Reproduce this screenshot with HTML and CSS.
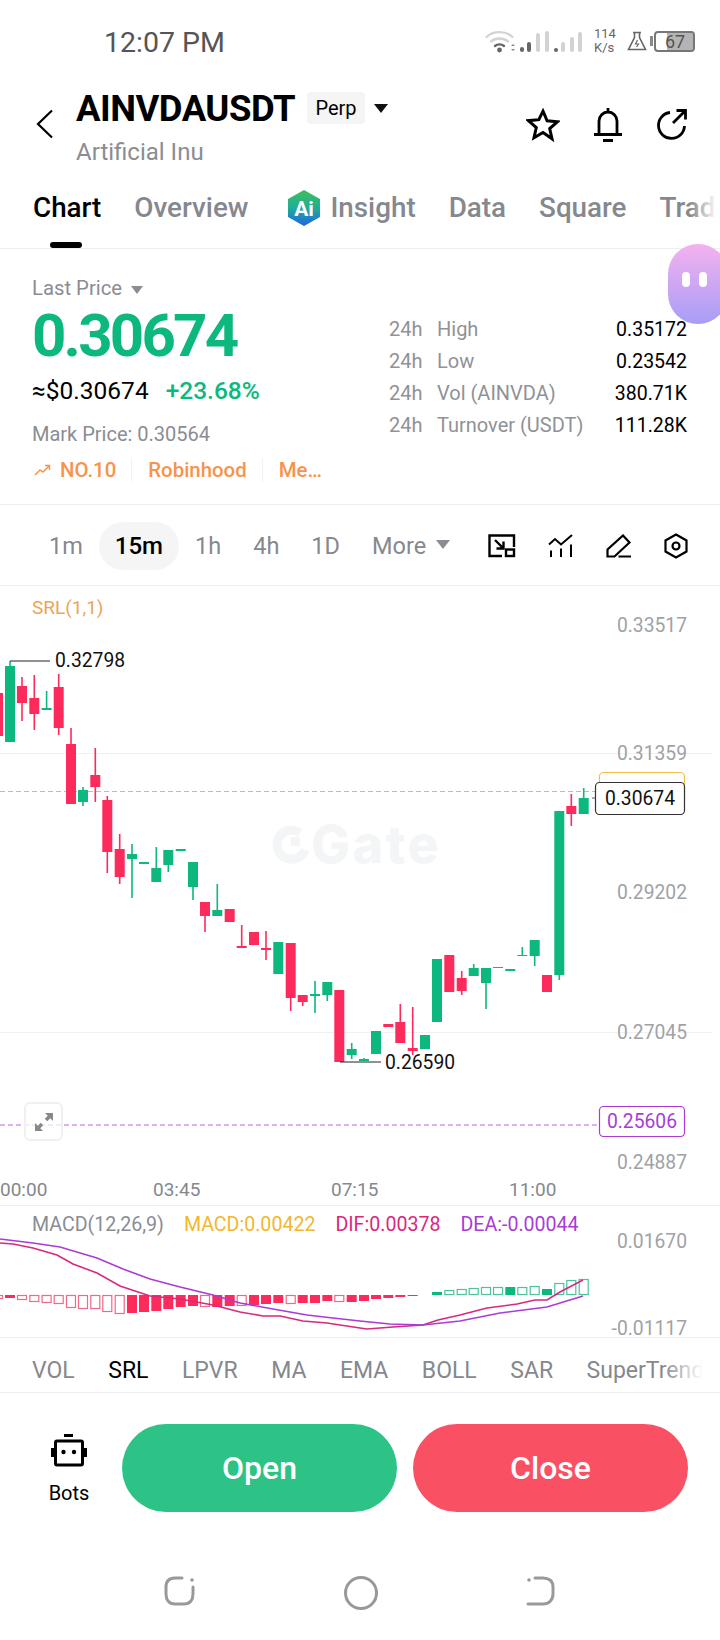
FILE: index.html
```html
<!DOCTYPE html>
<html lang="en">
<head>
    <meta charset="UTF-8">
    <meta name="viewport" content="width=device-width, initial-scale=1.0">
    <title>AINVDAUSDT</title>
    <link rel="stylesheet" href="styles.css">
</head>
<body>
    <div class="status-bar">
        <span class="clock">12:07 PM</span>
        <div class="status-icons">
            <svg class="signal" width="98" height="26" viewBox="0 0 98 26">
                <g fill="none" stroke-width="2.4" stroke-linecap="round">
                    <path d="M1.5 9C8 2.5 21 2.5 27.5 9" stroke="#d4d4d4"/>
                    <path d="M6 13.5C10.5 9.5 18.5 9.5 23 13.5" stroke="#d4d4d4"/>
                    <path d="M10 18C12.5 15.8 16.5 15.8 19 18" stroke="#666"/>
                </g>
                <circle cx="14.5" cy="22" r="2.4" fill="#666"/>
                <path d="M26 18l2-2 2 2zM26 21l2 2 2-2z" fill="#888"/>
                <g fill="#666">
                    <rect x="35" y="19" width="4" height="5" rx="2"/>
                    <rect x="42" y="14" width="4" height="10" rx="2"/>
                    <rect x="69" y="20" width="4" height="4" rx="2"/>
                </g>
                <g fill="#d2d2d2">
                    <rect x="51" y="5" width="4" height="19" rx="2"/>
                    <rect x="60" y="3" width="4" height="21" rx="2"/>
                    <rect x="76" y="14" width="4" height="10" rx="2"/>
                    <rect x="85" y="9" width="4" height="15" rx="2"/>
                    <rect x="93" y="4" width="4" height="20" rx="2"/>
                </g>
            </svg>
            <div class="net-speed"><span>114</span><span>K/s</span></div>
            <svg class="flask" width="20" height="20" viewBox="0 0 20 20" fill="none" stroke="#666" stroke-width="1.6">
                <path d="M6 1.5h8M7.5 1.5v5L1.5 18.5h17L12.5 6.5v-5"/>
                <path d="M10.5 9l-2 4h3l-2 3" stroke-width="1.2"/>
            </svg>
            <span class="battery-nub"></span>
            <div class="battery">67</div>
        </div>
    </div>

    <header class="top-bar">
        <svg class="back" width="20" height="30" viewBox="0 0 20 30" fill="none" stroke="#000" stroke-width="2.2">
            <path d="M17 1.5L3 15l14 13.5"/>
        </svg>
        <div class="pair">
            <div class="pair-row">
                <h1>AINVDAUSDT</h1>
                <span class="pair-type">Perp</span>
                <span class="caret caret-dark"></span>
            </div>
            <div class="pair-name">Artificial Inu</div>
        </div>
        <div class="top-actions">
            <svg width="34" height="34" viewBox="0 0 32 32" fill="none" stroke="#000" stroke-width="2.8">
                <path d="M16 3l3.9 9 9.8.9-7.4 6.5 2.2 9.6L16 23l-8.5 5 2.2-9.6-7.4-6.500 9.800-.9z"/>
            </svg>
            <svg width="30" height="34" viewBox="0 0 30 34" fill="none" stroke="#000" stroke-width="2.8">
                <path d="M15 0v3M6 26V13a9 9 0 0 1 18 0v13M1 26.5h28M10 32.5h10"/>
            </svg>
            <svg width="32" height="32" viewBox="0 0 32 32" fill="none" stroke="#000" stroke-width="2.8">
                <path d="M14 4.5A13 13 0 1 0 28.5 18M17 15L29.5 2.5M20.5 2.5h9v9"/>
            </svg>
        </div>
    </header>

    <nav class="tabs">
        <span class="tab tab-active">Chart</span>
        <span class="tab">Overview</span>
        <span class="tab tab-insight">
            <svg width="34" height="36" viewBox="0 0 34 36">
                <defs>
                    <linearGradient id="aiGrad" x1="0" y1="0" x2="0" y2="1">
                        <stop offset="0" stop-color="#3ebd5c"/>
                        <stop offset="0.5" stop-color="#1fae9a"/>
                        <stop offset="1" stop-color="#2267e0"/>
                    </linearGradient>
                </defs>
                <path d="M17 1l15 8.5v17L17 35 2 26.500V9.500z" fill="url(#aiGrad)" stroke="url(#aiGrad)" stroke-width="2" stroke-linejoin="round"/>
                <text class="ai-mark" x="17" y="26" text-anchor="middle">Ai</text>
            </svg>
            Insight
        </span>
        <span class="tab">Data</span>
        <span class="tab">Square</span>
        <span class="tab">Trade</span>
    </nav>

    <section class="price-panel">
        <div class="price-main">
            <div class="price-kind">Last Price <span class="caret"></span></div>
            <div class="price-value">0.30674</div>
            <div class="price-sub"><span>≈$0.30674</span><span class="up">+23.68%</span></div>
            <div class="mark-price">Mark Price: 0.30564</div>
            <div class="price-tags">
                <svg width="17" height="12" viewBox="0 0 17 12" fill="none" stroke="#f7934b" stroke-width="1.5">
                    <path d="M1 11l5-5 3 2 6-6M11 1.500h4.500V6"/>
                </svg>
                <span class="tag-first">NO.10</span>
                <span class="tag">Robinhood</span>
                <span class="tag">Me…</span>
            </div>
        </div>
        <div class="stats">
            <div class="stat"><span class="stat-period">24h</span><span class="stat-label">High</span><span class="stat-value">0.35172</span></div>
            <div class="stat"><span class="stat-period">24h</span><span class="stat-label">Low</span><span class="stat-value">0.23542</span></div>
            <div class="stat"><span class="stat-period">24h</span><span class="stat-label">Vol (AINVDA)</span><span class="stat-value">380.71K</span></div>
            <div class="stat"><span class="stat-period">24h</span><span class="stat-label">Turnover (USDT)</span><span class="stat-value">111.28K</span></div>
        </div>
        <div class="float-bot"><i></i><i></i></div>
    </section>

    <div class="time-bar">
        <span class="interval">1m</span>
        <span class="interval interval-active">15m</span>
        <span class="interval">1h</span>
        <span class="interval">4h</span>
        <span class="interval">1D</span>
        <span class="interval">More <span class="caret"></span></span>
        <div class="chart-tools">
            <svg width="28" height="24" viewBox="0 0 28 24" fill="none" stroke="#000" stroke-width="2.400">
                <path d="M14 22H1.500V1.500H26V13M7 6l8 8M15.500 7.500V14.500H8.500"/>
                <rect x="18" y="15.500" width="8" height="6.500"/>
            </svg>
            <svg width="26" height="24" viewBox="0 0 26 24" fill="none" stroke="#000" stroke-width="2">
                <path d="M1 10.500L7 5l6 5.500L24 1M3 16.500V23M13 14.500V23M23 10.500V23"/>
            </svg>
            <svg width="26" height="24" viewBox="0 0 26 24" fill="none" stroke="#000" stroke-width="2.200">
                <path d="M1.500 22.500V15.500L17 1.500l6.500 7L8.500 22.500zM12.500 22.500H25"/>
            </svg>
            <svg width="24" height="26" viewBox="0 0 24 26" fill="none" stroke="#000" stroke-width="2.200">
                <path d="M12 1.500l10.500 6v11L12 24.500l-10.500-6v-11z"/>
                <circle cx="12" cy="13" r="3.500"/>
            </svg>
        </div>
    </div>

    <section class="chart">
        <svg class="chart-canvas" width="720" height="619" viewBox="0 586 720 619">
            <g stroke="#f0f1f2" stroke-width="1">
                <line x1="0" y1="753.5" x2="712" y2="753.5"/>
                <line x1="0" y1="1032.500" x2="712" y2="1032.500"/>
            </g>
            <g class="watermark">
                <path d="M300 833A14.500 14.500 0 1 0 305 850" fill="none" stroke="#f3f5f6" stroke-width="9"/>
                <rect x="291" y="837" width="9" height="9" fill="#f3f5f6"/>
                <text x="311" y="863">Gate</text>
            </g>
            <text class="srl-label" x="32" y="614">SRL(1,1)</text>
            <line class="last-line" x1="0" y1="791.500" x2="596" y2="791.500"/>
            <line class="liq-line" x1="0" y1="1125" x2="600" y2="1125"/>
            <g id="candles"></g>

            <path d="M10 661H50M340 1062H381" stroke="#222" stroke-width="1.200" fill="none"/>
            <text class="extreme" x="55" y="667">0.32798</text>
            <text class="extreme" x="385" y="1069">0.26590</text>

            <g class="axis">
                <text x="687" y="632">0.33517</text>
                <text x="687" y="760">0.31359</text>
                <text x="687" y="899">0.29202</text>
                <text x="687" y="1039">0.27045</text>
                <text x="687" y="1169">0.24887</text>
            </g>

            <rect x="599.500" y="772.500" width="85" height="30" rx="4" fill="#fff" stroke="#eec14a" stroke-width="1.200"/>
            <path d="M592 798h3" stroke="#555" stroke-width="1"/>
            <rect x="595.500" y="782.500" width="89" height="32" rx="4" fill="#fff" stroke="#333" stroke-width="1.200"/>
            <text class="tag-price" x="640" y="805">0.30674</text>
            <rect x="599.500" y="1106.500" width="85" height="30" rx="4" fill="#fff" stroke="#a93cd6" stroke-width="1.200"/>
            <text class="tag-price tag-liq" x="642" y="1128">0.25606</text>
        </svg>
        <div class="expand">
            <svg width="20" height="20" viewBox="0 0 20 20" fill="#888">
                <path d="M11 1h8v8l-2.800-2.800-3 3-2.400-2.400 3-3zM9 19H1v-8l2.800 2.800 3-3 2.400 2.400-3 3z"/>
            </svg>
        </div>
        <div class="time-axis">
            <span>00:00</span>
            <span>03:45</span>
            <span>07:15</span>
            <span>11:00</span>
        </div>
    </section>

    <section class="macd">
        <div class="macd-legend">
            <span class="macd-name">MACD(12,26,9)</span>
            <span class="macd-val">MACD:0.00422</span>
            <span class="macd-dif">DIF:0.00378</span>
            <span class="macd-dea">DEA:-0.00044</span>
        </div>
        <svg class="macd-canvas" width="720" height="131" viewBox="0 1206 720 131">
            <g id="macdBars"></g>
            <polyline id="difLine" class="dif-line" points=""/>
            <polyline id="deaLine" class="dea-line" points=""/>
            <g class="axis">
                <text x="687" y="1248">0.01670</text>
                <text x="687" y="1335">-0.01117</text>
            </g>
        </svg>
    </section>

    <nav class="indicators">
        <span>VOL</span>
        <span class="indicator-active">SRL</span>
        <span>LPVR</span>
        <span>MA</span>
        <span>EMA</span>
        <span>BOLL</span>
        <span>SAR</span>
        <span>SuperTrend</span>
    </nav>

    <div class="actions">
        <div class="bots">
            <svg width="36" height="33" viewBox="0 0 36 33" fill="none" stroke="#000" stroke-width="3">
                <path d="M13 1.500h9" />
                <rect x="4.500" y="7" width="27" height="24" rx="1.500"/>
                <path d="M1.500 14v9M34.500 14v9"/>
                <circle cx="12.500" cy="18" r="2.200" fill="#000" stroke="none"/>
                <circle cx="23" cy="18" r="2.200" fill="#000" stroke="none"/>
            </svg>
            <span>Bots</span>
        </div>
        <button class="trade-btn btn-open">Open</button>
        <button class="trade-btn btn-close">Close</button>
    </div>

    <div class="nav-bar">
        <svg width="32" height="30" viewBox="0 0 32 30" fill="none" stroke="#999" stroke-width="3" stroke-linecap="round">
            <path d="M18 2H11C5 2 2 5.500 2 11v7c0 6 3 10 9 10h9c6 0 9-4 9-10v-7"/>
            <circle cx="28" cy="4" r="1.800" fill="#999" stroke="none"/>
        </svg>
        <svg width="36" height="34" viewBox="0 0 36 34" fill="none" stroke="#999" stroke-width="3">
            <circle cx="18" cy="17" r="15.500"/>
        </svg>
        <svg width="30" height="30" viewBox="0 0 30 30" fill="none" stroke="#999" stroke-width="3" stroke-linecap="round">
            <path d="M9 2h8c6 0 10 3 10 9v7c0 6-4 10-10 10H2"/>
            <circle cx="3" cy="4" r="1.800" fill="#999" stroke="none"/>
        </svg>
    </div>

    <script src="chart.js"></script>
</body>
</html>
```

FILE: styles.css
```css
* {
    box-sizing: border-box;
}

body {
    margin: 0;
    width: 720px;
    height: 1640px;
    overflow: hidden;
    position: relative;
    background: #fff;
    color: #000;
    font-family: 'Roboto', 'Liberation Sans', sans-serif;
}

/* status bar */
.status-bar {
    height: 82px;
    display: flex;
    align-items: center;
    padding-left: 104px;
}

.clock {
    font-size: 28.500px;
    color: #555;
    margin-top: 2px;
}

.status-icons {
    margin-left: auto;
    display: flex;
    align-items: center;
    padding-right: 25px;
}

.signal {
    margin-right: 11px;
}

.net-speed {
    display: flex;
    flex-direction: column;
    font-size: 13px;
    line-height: 14px;
    color: #666;
    width: 33px;
}

.flask {
    margin-right: 3px;
}

.battery-nub {
    width: 3px;
    height: 10px;
    background: #888;
    margin-right: 1px;
}

.battery {
    width: 41px;
    height: 21px;
    border: 2px solid #777;
    border-radius: 4px;
    font-size: 18px;
    line-height: 17px;
    color: #555;
    padding-left: 9px;
    background: linear-gradient(90deg, #fff 30%, #b4b4b4 30%);
    background-clip: content-box;
}

/* pair header */
.top-bar {
    height: 90px;
    display: flex;
    position: relative;
    padding-left: 35px;
}

.back {
    margin-top: 27px;
    margin-right: 21px;
}

.pair-row {
    display: flex;
    align-items: center;
    height: 42px;
    margin-top: 5px;
}

.pair-row h1 {
    margin: 0;
    font-size: 36.500px;
    font-weight: 700;
    letter-spacing: -0.5px;
}

.pair-type {
    margin-left: 12px;
    width: 58px;
    height: 32px;
    background: #f5f5f5;
    border-radius: 4px;
    font-size: 20px;
    line-height: 32px;
    text-align: center;
}

.caret {
    display: inline-block;
    width: 0;
    height: 0;
    border-left: 6px solid transparent;
    border-right: 6px solid transparent;
    border-top: 8px solid #8a8d93;
    vertical-align: middle;
    margin-left: 4px;
}

.caret-dark {
    margin-left: 9px;
    border-left-width: 7px;
    border-right-width: 7px;
    border-top: 9px solid #111;
}

.pair-name {
    font-size: 24px;
    color: #8a8d93;
    margin-top: 9px;
}

.top-actions {
    margin-left: auto;
    display: flex;
    align-items: flex-start;
    gap: 33px;
    padding-top: 26px;
    padding-right: 32px;
}

/* tabs */
.tabs {
    height: 77px;
    display: flex;
    gap: 33px;
    padding-left: 33px;
    padding-top: 16px;
    border-bottom: 1px solid #eeeeee;
    position: relative;
    overflow: hidden;
    white-space: nowrap;
}

.tabs::after {
    content: "";
    position: absolute;
    right: 0;
    top: 0;
    bottom: 0;
    width: 30px;
    background: linear-gradient(90deg, rgba(255, 255, 255, 0), #fff 90%);
}

.tab {
    font-size: 27.800px;
    font-weight: 500;
    color: #85888e;
    line-height: 40px;
    height: 40px;
}

.tab-active {
    color: #000;
    position: relative;
    overflow: visible;
}

.tab-active::after {
    content: "";
    position: absolute;
    left: 17px;
    top: 54px;
    width: 32px;
    height: 6px;
    background: #000;
    border-radius: 3px;
}

.tab-insight {
    display: flex;
    align-items: center;
    gap: 9px;
    margin-left: 6px;
}

.ai-mark {
    fill: #fff;
    font-size: 21px;
    font-weight: 700;
}

/* price block */
.price-panel {
    height: 256px;
    display: flex;
    position: relative;
    border-bottom: 1px solid #eeeeee;
}

.price-main {
    width: 389px;
    padding-left: 32px;
    padding-top: 27px;
}

.price-kind {
    font-size: 20.300px;
    line-height: 24px;
    color: #8a8d93;
}

.price-value {
    font-size: 60px;
    font-weight: 700;
    color: #0db87e;
    letter-spacing: -2.800px;
    line-height: 62px;
    margin-top: 5px;
}

.price-sub {
    display: flex;
    gap: 17px;
    font-size: 24.500px;
    line-height: 30px;
    margin-top: 9px;
}

.price-sub .up {
    color: #0db87e;
    font-weight: 500;
}

.mark-price {
    font-size: 20px;
    line-height: 26px;
    color: #8a8d93;
    margin-top: 15px;
}

.price-tags {
    display: flex;
    align-items: center;
    font-size: 20.400px;
    font-weight: 500;
    color: #f7934b;
    height: 26px;
    margin-top: 10px;
}

.price-tags svg {
    margin: 0 9px 0 2px;
}

.tag {
    margin-left: 15px;
    padding-left: 16px;
    border-left: 1px solid #f2f2f2;
}

.stats {
    width: 298px;
    padding-top: 64px;
}

.stat {
    display: flex;
    height: 32px;
    align-items: center;
    font-size: 20px;
    color: #8f9296;
}

.stat-period {
    width: 48px;
}

.stat-value {
    margin-left: auto;
    color: #000;
    font-size: 19.500px;
}

.float-bot {
    position: absolute;
    left: 668px;
    top: -5px;
    width: 60px;
    height: 80px;
    border-radius: 36px;
    background: linear-gradient(180deg, #f4b2ef, #a79df6);
    display: flex;
    gap: 9px;
    padding: 28px 0 0 14px;
}

.float-bot i {
    width: 8px;
    height: 15px;
    border-radius: 4px;
    background: #fff;
}

/* interval row */
.time-bar {
    height: 81px;
    display: flex;
    align-items: center;
    padding-left: 33px;
    padding-right: 32px;
    padding-top: 2px;
    border-bottom: 1px solid #eeeeee;
}

.interval {
    font-size: 23.500px;
    color: #85888e;
    height: 48px;
    line-height: 48px;
    padding: 0 16px;
    white-space: nowrap;
}

.interval-active {
    background: #f5f5f5;
    border-radius: 24px;
    color: #000;
    font-weight: 500;
    font-size: 24px;
}

.interval .caret {
    border-left-width: 7px;
    border-right-width: 7px;
    border-top-width: 9px;
    margin-top: -6px;
}

.chart-tools {
    margin-left: auto;
    display: flex;
    align-items: center;
    gap: 32px;
}

/* chart */
.chart {
    height: 620px;
    position: relative;
    border-bottom: 1px solid #eeeeee;
}

.chart-canvas {
    display: block;
}

.chart-canvas text {
    font-size: 19.300px;
}

.chart-canvas .srl-label {
    fill: #e9a656;
    font-size: 19px;
}

.last-line {
    stroke: #efbc3d;
    stroke-width: 1;
    stroke-dasharray: 5 3;
}

.liq-line {
    stroke: #cf99ea;
    stroke-width: 1.5;
    stroke-dasharray: 5 3;
}

.chart-canvas .watermark text {
    font-family: 'Inter', sans-serif;
    font-size: 52px;
    font-weight: 800;
    letter-spacing: 2.500px;
    fill: #f3f5f6;
}

.extreme {
    fill: #111;
}

.axis text {
    fill: #a0a2a6;
    text-anchor: end;
}

.tag-price {
    fill: #111;
    text-anchor: middle;
}

.chart-canvas .tag-liq {
    fill: #a93cd6;
}

.expand {
    position: absolute;
    left: 24px;
    top: 516px;
    width: 39px;
    height: 39px;
    border: 2px solid #f0f0f0;
    border-radius: 6px;
    background: rgba(255, 255, 255, 0.7);
    display: flex;
    align-items: center;
    justify-content: center;
}

.time-axis span {
    position: absolute;
    top: 592px;
    font-size: 19px;
    line-height: 24px;
    color: #85888e;
}

.time-axis span:nth-child(1) { left: 0; }
.time-axis span:nth-child(2) { left: 153px; }
.time-axis span:nth-child(3) { left: 331px; }
.time-axis span:nth-child(4) { left: 509px; }

/* macd */
.macd {
    height: 132px;
    position: relative;
    border-bottom: 1px solid #eeeeee;
}

.macd-legend {
    position: absolute;
    left: 32px;
    top: 7px;
    display: flex;
    gap: 20px;
    font-size: 19.600px;
    line-height: 24px;
    white-space: nowrap;
}

.macd-name { color: #8a8d93; }
.macd-val { color: #f3b72e; }
.macd-dif { color: #d9297d; }
.macd-dea { color: #a93cd6; }

.macd-canvas {
    display: block;
    overflow: visible;
}

.macd-canvas text {
    font-size: 19.300px;
}

.dif-line,
.dea-line {
    fill: none;
    stroke-width: 1.600;
}

.dif-line { stroke: #d9297d; }
.dea-line { stroke: #a93cd6; }

/* indicator tabs */
.indicators {
    height: 55px;
    display: flex;
    align-items: center;
    gap: 33.500px;
    padding-left: 32px;
    padding-top: 10px;
    font-size: 23px;
    color: #85888e;
    white-space: nowrap;
    overflow: hidden;
    position: relative;
    border-bottom: 1px solid #eeeeee;
}

.indicators::after {
    content: "";
    position: absolute;
    right: 17px;
    top: 0;
    bottom: 0;
    width: 40px;
    background: linear-gradient(90deg, rgba(255, 255, 255, 0), #fff);
}

.indicators::before {
    content: "";
    position: absolute;
    right: 0;
    top: 0;
    bottom: 0;
    width: 17px;
    background: #fff;
    z-index: 1;
}

.indicator-active {
    color: #000;
}

/* bottom actions */
.actions {
    height: 151px;
    display: flex;
    align-items: flex-start;
    padding-top: 31px;
    padding-left: 122px;
    gap: 16px;
    position: relative;
}

.bots {
    position: absolute;
    left: 32px;
    top: 41px;
    width: 74px;
    display: flex;
    flex-direction: column;
    align-items: center;
    gap: 14px;
    font-size: 20px;
}

.trade-btn {
    width: 275px;
    height: 88px;
    border: none;
    border-radius: 44px;
    color: #fff;
    font-family: inherit;
    font-size: 32px;
    font-weight: 500;
}

.btn-open { background: #2dc386; }
.btn-close { background: #f95063; }

/* android nav */
.nav-bar {
    height: 95px;
    display: flex;
    align-items: flex-start;
    padding-top: 32px;
    padding-left: 164px;
    gap: 147px;
}
```

FILE: chart.js
```javascript
// x, wick top, wick bottom, body top, body bottom, up?
const candles = [
    [-2, 693, 736, 693, 736, 0],
    [10, 661, 742, 666, 742, 1],
    [22, 677, 721, 686, 703, 0],
    [34.3, 675, 730, 698, 714, 0],
    [46.6, 691, 710, 708, 710, 1],
    [58.7, 674, 735, 687, 728, 0],
    [71, 728, 804, 744, 804, 0],
    [83, 787, 806, 790, 802, 1],
    [95.3, 748, 802, 775, 787, 0],
    [107.3, 796, 873, 800, 852, 0],
    [119.7, 834, 884, 849, 877, 0],
    [132, 844, 898, 854, 859, 1],
    [144, 862, 864, 862, 864, 1],
    [156.3, 847, 882, 868, 882, 1],
    [168.3, 850, 872, 850, 865, 1],
    [180.7, 849, 851, 849, 851, 1],
    [193, 862, 900, 862, 887, 1],
    [205, 902, 932, 902, 916, 0],
    [217.3, 884, 916, 910, 916, 1],
    [229.7, 909, 922, 909, 922, 0],
    [241.7, 925, 948, 946, 948, 0],
    [254, 932, 945, 932, 945, 0],
    [266, 931, 960, 948, 950, 0],
    [278.3, 942, 974, 942, 974, 1],
    [290.7, 943, 1011, 943, 998, 0],
    [302.7, 995, 1006, 995, 1002, 0],
    [315, 981, 1013, 994, 996, 1],
    [327.3, 982, 1001, 982, 995, 1],
    [339.3, 990, 1062, 990, 1062, 0],
    [351.7, 1043, 1059, 1049, 1055, 1],
    [364, 1058, 1061, 1059, 1061, 1],
    [376, 1031, 1054, 1031, 1054, 1],
    [388.3, 1024, 1027, 1024, 1027, 0],
    [400.3, 1004, 1043, 1022, 1043, 0],
    [412.7, 1007, 1055, 1048, 1051, 0],
    [425, 1035, 1049, 1035, 1049, 1],
    [437, 959, 1022, 959, 1022, 1],
    [449.3, 955, 992, 955, 992, 0],
    [461.7, 971, 995, 978, 991, 0],
    [473.7, 964, 976, 968, 976, 1],
    [486, 968, 1009, 968, 983, 1],
    [498, 967, 968, 967, 968, 1],
    [510.3, 969, 971, 969, 971, 1],
    [522.3, 947, 956, 955, 956, 1],
    [534.7, 940, 966, 940, 956, 1],
    [547, 975, 992, 975, 992, 0],
    [559.3, 811, 980, 811, 975, 1],
    [571.3, 794, 826, 806, 814, 0],
    [583.7, 788, 814, 798, 814, 1]
];

// x, height below/above the zero line, filled?
const redBars = [
    [-2, 4, 0], [10, 3, 1], [22, 5, 0], [34.3, 7, 0], [46.6, 8, 0], [58.7, 9, 0],
    [71, 13, 0], [83, 14, 0], [95.3, 14, 0], [107.3, 17, 0], [119.7, 19, 0], [132, 18, 1],
    [144, 17, 1], [156.3, 16, 1], [168.3, 14, 1], [180.7, 12, 1], [193, 11, 1], [205, 12, 0],
    [217.3, 12, 1], [229.7, 11, 1], [241.7, 11, 0], [254, 10, 1], [266, 9, 1], [278.3, 8, 1],
    [290.7, 9, 0], [302.7, 8, 1], [315, 8, 1], [327.3, 6, 1], [339.3, 7, 0], [351.7, 7, 1],
    [364, 6, 1], [376, 4, 1], [388.3, 3, 1], [400.3, 2, 1], [412.7, 1, 1]
];
const greenBars = [
    [437, 3, 1], [449.3, 5, 0], [461.7, 6, 0], [473.7, 7, 0], [486, 8, 0], [498, 8, 0],
    [510.3, 8, 1], [522.3, 8, 0], [534.7, 9, 0], [547, 6, 1], [559.3, 12, 0], [571.3, 15, 0],
    [583.7, 16, 0]
];

const difPoints = [
    [0, 1243], [13, 1244], [33, 1248], [57, 1255], [73, 1264], [97, 1273], [120, 1286],
    [150, 1296], [180, 1299], [213, 1305], [240, 1312], [263, 1316], [280, 1316],
    [303, 1321], [327, 1323], [340, 1325], [360, 1328], [367, 1329], [393, 1327],
    [423, 1325], [438, 1320], [460, 1315], [487, 1308], [517, 1304], [535, 1300],
    [547, 1300], [560, 1292], [583, 1280]
];
const deaPoints = [
    [0, 1239], [33, 1243], [60, 1247], [97, 1258], [123, 1269], [150, 1279], [180, 1287],
    [213, 1295], [240, 1303], [273, 1309], [307, 1315], [333, 1318], [360, 1321],
    [390, 1324], [423, 1325], [460, 1321], [500, 1313], [547, 1307], [583, 1296]
];

const ns = 'http://www.w3.org/2000/svg';

function addRect(parent, x, y, w, h, attrs) {
    const r = document.createElementNS(ns, 'rect');
    r.setAttribute('x', x);
    r.setAttribute('y', y);
    r.setAttribute('width', w);
    r.setAttribute('height', h);
    for (const key in attrs) {
        r.setAttribute(key, attrs[key]);
    }
    parent.appendChild(r);
}

const candleGroup = document.getElementById('candles');
candles.forEach(function(c) {
    const color = c[5] ? '#0db87e' : '#fd2b5b';
    addRect(candleGroup, c[0] - 0.8, c[1], 1.6, c[2] - c[1], { fill: color });
    addRect(candleGroup, c[0] - 5, c[3], 10, c[4] - c[3], { fill: color });
});

const barGroup = document.getElementById('macdBars');
const zero = 1295;

function drawBar(x, y, h, filled, color) {
    if (filled) {
        addRect(barGroup, x - 5, y, 10, h, { fill: color });
    } else {
        addRect(barGroup, x - 4.5, y + 0.5, 9, h - 1, { fill: '#fff', stroke: color, 'stroke-width': 1.2 });
    }
}

redBars.forEach(function(b) {
    drawBar(b[0], zero, b[1], b[2], b[2] ? '#fd2b5b' : '#ee6a88');
});
greenBars.forEach(function(b) {
    drawBar(b[0], zero - b[1], b[1], b[2], b[2] ? '#0db87e' : '#4cc39d');
});

function toPoints(list) {
    return list.map(function(p) { return p.join(','); }).join(' ');
}

document.getElementById('difLine').setAttribute('points', toPoints(difPoints));
document.getElementById('deaLine').setAttribute('points', toPoints(deaPoints));
```
